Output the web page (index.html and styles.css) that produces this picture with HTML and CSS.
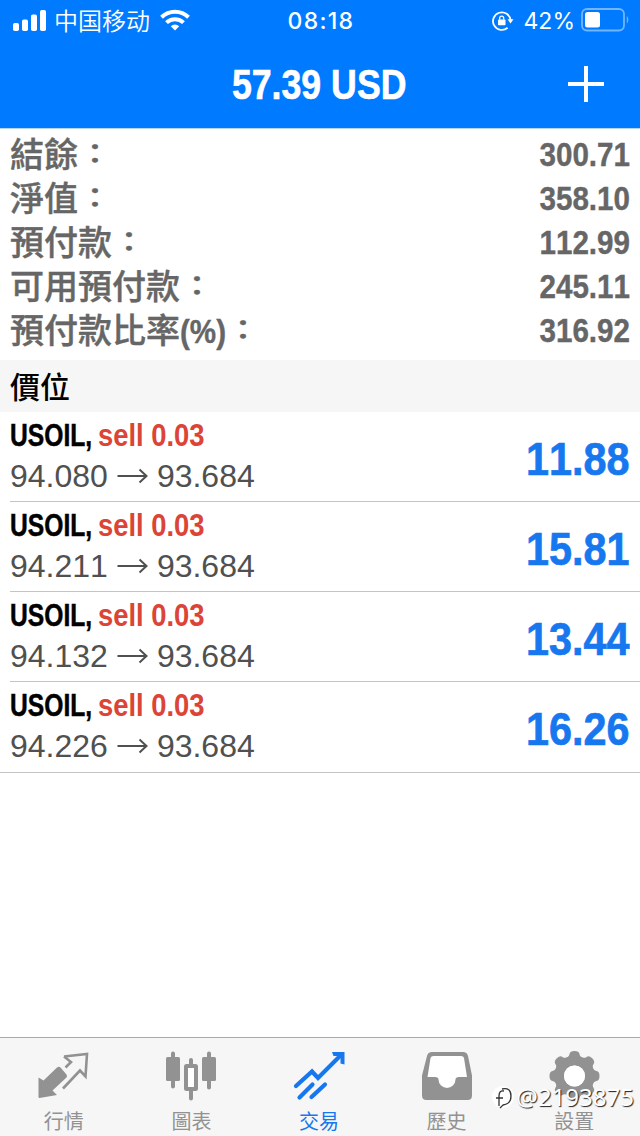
FILE: index.html
```html
<!DOCTYPE html>
<html lang="zh-Hant">
<head>
    <meta charset="UTF-8">
    <meta name="viewport" content="width=device-width, initial-scale=1.0">
    <title>交易</title>
    <link rel="stylesheet" href="styles.css">
</head>
<body>
    <div class="app">
        <header class="header">
            <div class="status-bar">
                <div class="status-left">
                    <svg class="signal" width="34" height="22" viewBox="0 0 34 22" fill="#fff">
                        <rect x="0" y="14" width="6" height="8" rx="1.8"/>
                        <rect x="9" y="10.5" width="6" height="11.5" rx="1.8"/>
                        <rect x="18" y="5.5" width="6" height="16.5" rx="1.8"/>
                        <rect x="27" y="1" width="6" height="21" rx="1.8"/>
                    </svg>
                    <span class="carrier" lang="zh-Hans">中国移动</span>
                    <svg class="wifi" width="30" height="22" viewBox="0 0 30 22" fill="none" stroke="#fff" stroke-width="4">
                        <path d="M1.5 8.2a19.3 19.3 0 0 1 27 0"/>
                        <path d="M6.5 13.6a12.2 12.2 0 0 1 17 0"/>
                        <path d="M15 21.5l-4.2-4.3a6 6 0 0 1 8.4 0z" fill="#fff" stroke="none"/>
                    </svg>
                </div>
                <span class="time">08:18</span>
                <div class="status-right">
                    <svg width="22" height="22" viewBox="0 0 22 22" fill="none" stroke="#fff" stroke-width="1.8">
                        <path d="M18.6 10.3A8.8 8.8 0 1 0 15.6 17.8"/>
                        <path d="M15.5 9.2h6l-3 4.3z" fill="#fff" stroke="none"/>
                        <rect x="6" y="9.5" width="7.5" height="5.8" rx="0.8" fill="#fff" stroke="none"/>
                        <path d="M7.7 9.8V8.2a2 2 0 0 1 4 0v1.6" stroke-width="1.3"/>
                    </svg>
                    <span class="percent">42%</span>
                    <svg class="battery" width="48" height="24" viewBox="0 0 48 24">
                        <rect x="1" y="1" width="42" height="21.5" rx="5" fill="none" stroke="#fff" stroke-opacity="0.45" stroke-width="1.8"/>
                        <rect x="4" y="4" width="15" height="15.5" rx="2.5" fill="#fff"/>
                        <path d="M45.8 8c2 1.5 2 6 0 7.5z" fill="#fff" fill-opacity="0.45"/>
                    </svg>
                </div>
            </div>
            <div class="nav-bar">
                <h1 class="title">57.39 USD</h1>
                <svg class="add" width="36" height="36" viewBox="0 0 36 36" stroke="#fff" stroke-width="4"><path d="M18 0v36M0 18h36"/></svg>
            </div>
        </header>

        <dl class="account">
            <div class="account-row"><dt>結餘<span class="colon">：</span></dt><dd>300.71</dd></div>
            <div class="account-row"><dt>淨值<span class="colon">：</span></dt><dd>358.10</dd></div>
            <div class="account-row"><dt>預付款<span class="colon">：</span></dt><dd>112.99</dd></div>
            <div class="account-row"><dt>可用預付款<span class="colon">：</span></dt><dd>245.11</dd></div>
            <div class="account-row"><dt>預付款比率<span class="unit">(%)</span><span class="colon">：</span></dt><dd>316.92</dd></div>
        </dl>

        <h2 class="section">價位</h2>

        <ul class="positions">
            <li class="position">
                <div>
                    <div class="order"><span class="symbol">USOIL,</span><span class="side">sell 0.03</span></div>
                    <div class="prices">94.080<svg class="arrow" viewBox="0 0 30 16"><path d="M0 8h29M22 1.5l7 6.5l-7 6.5"/></svg>93.684</div>
                </div>
                <span class="profit">11.88</span>
            </li>
            <li class="position">
                <div>
                    <div class="order"><span class="symbol">USOIL,</span><span class="side">sell 0.03</span></div>
                    <div class="prices">94.211<svg class="arrow" viewBox="0 0 30 16"><path d="M0 8h29M22 1.5l7 6.5l-7 6.5"/></svg>93.684</div>
                </div>
                <span class="profit">15.81</span>
            </li>
            <li class="position">
                <div>
                    <div class="order"><span class="symbol">USOIL,</span><span class="side">sell 0.03</span></div>
                    <div class="prices">94.132<svg class="arrow" viewBox="0 0 30 16"><path d="M0 8h29M22 1.5l7 6.5l-7 6.5"/></svg>93.684</div>
                </div>
                <span class="profit">13.44</span>
            </li>
            <li class="position">
                <div>
                    <div class="order"><span class="symbol">USOIL,</span><span class="side">sell 0.03</span></div>
                    <div class="prices">94.226<svg class="arrow" viewBox="0 0 30 16"><path d="M0 8h29M22 1.5l7 6.5l-7 6.5"/></svg>93.684</div>
                </div>
                <span class="profit">16.26</span>
            </li>
        </ul>

        <nav class="tab-bar">
            <a class="tab">
                <svg width="52" height="52" viewBox="0 0 52 52" fill="currentColor">
                    <path d="M0.5 25.5L5.500 28.500L19 15.500Q21 14 22.500 15.500L28.500 22.500Q29.500 24 28.500 25.500L14.500 38.500L19 43L1.500 46Q0.500 46 0.500 45z"/>
                    <path d="M26 4.500L49 2L47.500 24.500L42 18.500L25 36.500M26 4.500L33 10L27.500 15.500" fill="none" stroke="currentColor" stroke-width="2.6"/>
                </svg>
                <span>行情</span>
            </a>
            <a class="tab">
                <svg width="52" height="52" viewBox="0 0 52 52" fill="currentColor">
                    <rect x="1" y="5" width="14" height="24" rx="1.5"/>
                    <path d="M8 1.5v33M44 1.5v34M26 8v6M26 39v7.5" stroke="currentColor" stroke-width="4" stroke-linecap="round"/>
                    <rect x="21" y="14" width="10" height="23" rx="0.5" fill="#fff" stroke="currentColor" stroke-width="4"/>
                    <rect x="37" y="5" width="14" height="24" rx="1.5"/>
                </svg>
                <span>圖表</span>
            </a>
            <a class="tab active">
                <svg width="52" height="52" viewBox="0 0 52 52" fill="none" stroke="currentColor" stroke-width="4.2">
                    <path d="M3 34L19 19.5l6 6.5L47 4M6.5 45.5l13-13M18.500 45l13.500-12.500" stroke-linecap="round"/>
                    <path d="M39 0h12.5v12.5l-4-1V4h-7z" fill="currentColor" stroke="none"/>
                </svg>
                <span>交易</span>
            </a>
            <a class="tab">
                <svg width="52" height="52" viewBox="0 0 52 52" fill="currentColor" fill-rule="evenodd">
                    <path d="M10 2H43L48 26H36Q26 45 16 26H4z" fill="#fff"/>
                    <path d="M11 0H42q4 0 5 4l4 19.500v20q0 4.500-4.500 4.500H5.500Q1 48 1 43.500v-20L6 4Q7 0 11 0zM12.500 4Q10 4 9.500 6L6.500 25h7.500q3.500 0 3.500 2.500a8.500 8.500 0 0 0 17 0q0-2.500 3.500-2.500h8L43 6Q42.500 4 40 4z"/>
                </svg>
                <span>歷史</span>
            </a>
            <a class="tab">
                <svg width="52" height="52" viewBox="0 0 52 52" fill="currentColor">
                    <g transform="translate(26.5 24)">
                        <path fill-rule="evenodd" d="M0-20a20 20 0 1 0 0 40a20 20 0 1 0 0-40zM0-10.500a10.500 10.500 0 1 1 0 21a10.500 10.500 0 1 1 0-21z"/>
                        <g id="teeth">
                            <path id="tooth" d="M-9-18Q-5.500-19-5-22Q-4.500-25 0-25Q4.500-25 5-22Q5.500-19 9-18z"/>
                            <use href="#tooth" transform="rotate(45)"/>
                            <use href="#tooth" transform="rotate(90)"/>
                            <use href="#tooth" transform="rotate(135)"/>
                        </g>
                        <use href="#teeth" transform="rotate(180)"/>
                        <circle r="10.5" fill="#fff"/>
                    </g>
                </svg>
                <span>設置</span>
            </a>
            <div class="watermark">
                <svg width="25" height="25" viewBox="0 0 25 25" fill="none">
                    <circle cx="12" cy="12" r="11" fill="#fff"/>
                    <path d="M5 13h7M8 21V11Q8 5 13 6M11 4Q20 2 20 11Q20 19 12 20L9 23" stroke="#333" stroke-width="1.3"/>
                </svg>
                <span>@2193875</span>
            </div>
        </nav>
    </div>
</body>
</html>
```
FILE: styles.css
```css
* {
    box-sizing: border-box;
}
body {
    margin: 0;
    background: #fff;
    font-family: "Liberation Sans", "Noto Sans CJK TC", sans-serif;
    font-kerning: none;
}
.app {
    display: flex;
    flex-direction: column;
    width: 640px;
    height: 1136px;
    overflow: hidden;
}

/* Header */
.header {
    height: 129px;
    background: #007aff;
    border-bottom: 1px solid #b5d5f5;
    color: #fff;
}
.status-bar {
    display: grid;
    grid-template-columns: 1fr auto 1fr;
    align-items: center;
    height: 40px;
    padding: 0 11px 0 13px;
}
.status-left,
.status-right {
    display: flex;
    align-items: center;
}
.status-right {
    justify-content: flex-end;
}
.signal,
.wifi {
    margin-bottom: 2px;
}
.carrier {
    margin: 0 10px 2px 7px;
    font: 350 24px/38px "Noto Sans CJK SC", sans-serif;
}
.time {
    padding-top: 1px;
    font: 500 23px/40px Inter, sans-serif;
    letter-spacing: 1.3px;
}
.percent {
    margin: 1px 6px 0 10px;
    font: 400 23px/40px Inter, sans-serif;
}
.battery {
    margin-bottom: 2px;
}
.nav-bar {
    display: grid;
    grid-template-columns: 1fr auto 1fr;
    align-items: center;
    height: 88px;
    padding: 0 36px 0 34px;
}
.title {
    grid-column: 2;
    margin: 0;
    font-size: 43px;
    line-height: 89px;
    -webkit-text-stroke: 0.6px #fff;
    transform: scaleX(0.83);
}
.add {
    justify-self: end;
    margin-bottom: 2px;
}

/* Account summary */
.account {
    height: 231px;
    margin: 0;
    padding: 2px 10px 0;
    color: #666;
    font-weight: 500;
}
.account-row {
    display: flex;
    justify-content: space-between;
    height: 44px;
    font-size: 34px;
    line-height: 44px;
}
.account-row dt {
    font-family: "Noto Sans CJK TC", sans-serif;
    -webkit-text-stroke: 0.4px #666;
}
.account-row dd {
    margin: 1px 0 0;
    font-weight: 700;
    -webkit-text-stroke: 0.4px #666;
    transform: scaleX(0.87);
    transform-origin: right;
}
.unit {
    display: inline-block;
    width: 46px;
    font-family: "Liberation Sans", sans-serif;
    font-weight: 700;
    transform: scaleX(0.87);
    transform-origin: left;
}
.colon {
    display: inline-block;
    font-weight: 500;
    transform: scaleY(0.8);
}

.section {
    height: 52px;
    margin: 0;
    padding-left: 10px;
    background: #f6f6f6;
    font: 500 30px/51px "Noto Sans CJK TC", sans-serif;
}

/* Open positions */
.positions {
    flex: 1;
    margin: 0;
    padding: 0;
    list-style: none;
}
.position {
    display: flex;
    justify-content: space-between;
    height: 90px;
    margin-left: 10px;
    padding-right: 10px;
    border-bottom: 1px solid #c4c4c6;
}
.position:last-child {
    height: 91px;
    margin-left: 0;
    padding-left: 10px;
}
.order {
    display: flex;
    height: 46px;
    font-size: 32px;
    font-weight: 700;
    line-height: 46px;
    white-space: nowrap;
}
.symbol {
    width: 88px;
    color: #000;
    -webkit-text-stroke: 0.5px #000;
    transform: scaleX(0.77);
    transform-origin: left;
}
.symbol,
.side {
    flex: none;
}
.side {
    color: #db4437;
    transform: scaleX(0.855);
    transform-origin: left;
}
.prices {
    display: flex;
    align-items: center;
    color: #505050;
    font-size: 32px;
    line-height: 36px;
}
.arrow {
    width: 31px;
    height: 16px;
    margin: 0 9px;
    fill: none;
    stroke: #505050;
    stroke-width: 2;
}
.profit {
    color: #1677ee;
    font-size: 47px;
    font-weight: 700;
    line-height: 93px;
    -webkit-text-stroke: 0.7px #1677ee;
    transform: scaleX(0.88);
    transform-origin: right;
}

/* Tab bar */
.tab-bar {
    position: relative;
    display: grid;
    grid-template-columns: repeat(5, 1fr);
    height: 99px;
    padding-right: 2px;
    background: #f6f6f6;
    border-top: 1px solid #aaa;
}
.tab {
    display: flex;
    flex-direction: column;
    align-items: center;
    padding-top: 14px;
    color: #929292;
    font: 400 20px/34px "Noto Sans CJK TC", sans-serif;
}
.tab svg {
    overflow: visible;
}
.tab.active {
    color: #1677ee;
}
.watermark {
    position: absolute;
    right: 6px;
    bottom: 24px;
    display: flex;
    align-items: center;
    color: #fff;
    font: 400 24px/30px "Noto Sans", sans-serif;
    text-shadow: 1px 1px 1px #222;
}
```
